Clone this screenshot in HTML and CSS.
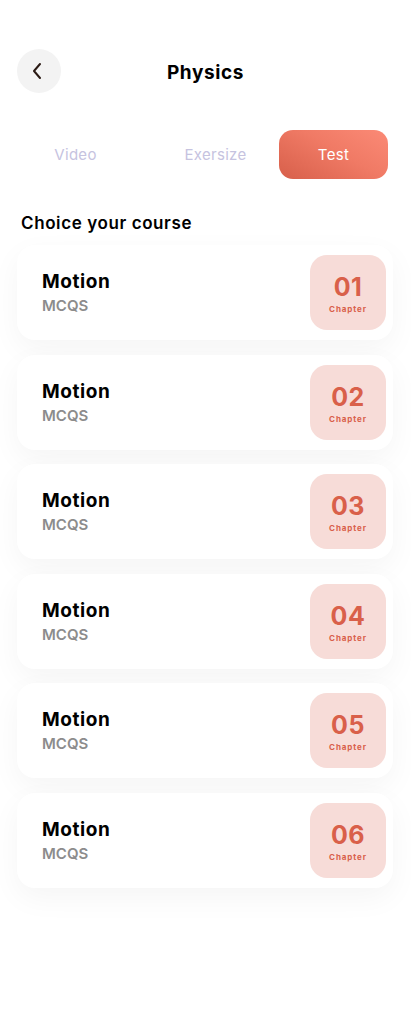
FILE: index.html
```html
<!DOCTYPE html>
<html lang="en">
<head>
  <meta charset="UTF-8" />
  <meta name="viewport" content="width=device-width, initial-scale=1.0"/>
  <title>Physics</title>
  <link rel="stylesheet" href="styles.css">
</head>
<body>

  <div class="header">
    <button class="back">
      <svg width="14" height="18" viewBox="0 0 14 18"><path d="M9 2 L3 9 L9 16" fill="none" stroke="#2a1a14" stroke-width="2" stroke-linecap="round" stroke-linejoin="round"/></svg>
    </button>
    <h1>Physics</h1>
  </div>

  <div class="tabs">
    <div class="tab">Video</div>
    <div class="tab">Exersize</div>
    <div class="tab active">Test</div>
  </div>

  <h2 class="section">Choice your course</h2>

  <div class="list">
    <div class="card">
      <div class="info"><div class="title">Motion</div><div class="sub">MCQS</div></div>
      <div class="badge"><span class="num">01</span><span class="lbl">Chapter</span></div>
    </div>
    <div class="card">
      <div class="info"><div class="title">Motion</div><div class="sub">MCQS</div></div>
      <div class="badge"><span class="num">02</span><span class="lbl">Chapter</span></div>
    </div>
    <div class="card">
      <div class="info"><div class="title">Motion</div><div class="sub">MCQS</div></div>
      <div class="badge"><span class="num">03</span><span class="lbl">Chapter</span></div>
    </div>
    <div class="card">
      <div class="info"><div class="title">Motion</div><div class="sub">MCQS</div></div>
      <div class="badge"><span class="num">04</span><span class="lbl">Chapter</span></div>
    </div>
    <div class="card">
      <div class="info"><div class="title">Motion</div><div class="sub">MCQS</div></div>
      <div class="badge"><span class="num">05</span><span class="lbl">Chapter</span></div>
    </div>
    <div class="card">
      <div class="info"><div class="title">Motion</div><div class="sub">MCQS</div></div>
      <div class="badge"><span class="num">06</span><span class="lbl">Chapter</span></div>
    </div>
  </div>

</body>
</html>
```

FILE: styles.css
```css
body {
  margin: 0;
  background: #fff;
  font-family: "Inter", "Noto Sans", sans-serif;
  color: #000;
}
.header {
  display: flex;
  align-items: center;
  padding: 49px 17px 0;
  height: 44px;
}
.back {
  width: 44px;
  height: 44px;
  border-radius: 50%;
  border: none;
  background: #f3f3f3;
  display: flex;
  align-items: center;
  justify-content: center;
  padding: 0 2px 0 0;
}
.header h1 {
  flex: 1;
  margin: 3px 44px 0 0;
  text-align: center;
  font-size: 19px;
  font-weight: 700;
  letter-spacing: 0.6px;
}
.tabs {
  display: flex;
  margin-top: 37px;
  padding-left: 21px;
}
.tab {
  width: 109px;
  height: 49px;
  display: flex;
  align-items: center;
  justify-content: center;
  font-size: 15px;
  letter-spacing: 0.3px;
  color: #c6c3df;
}
.tab + .tab {
  margin-left: 31px;
}
.tab.active {
  margin-left: 9px;
  border-radius: 14px;
  color: #fff;
  background: linear-gradient(30deg, #d75f4a 0%, #f07a65 55%, #fb8a76 100%);
}
.section {
  margin: 34px 0 0 21px;
  font-size: 17px;
  font-weight: 600;
  letter-spacing: 0.6px;
}
.list {
  display: flex;
  flex-direction: column;
  gap: 14.5px;
  padding: 12px 18px 120px 17px;
}
.card {
  height: 95px;
  border-radius: 18px;
  background: #fff;
  box-shadow: 0 10px 30px rgba(0, 0, 0, 0.045);
  display: flex;
  align-items: center;
  justify-content: space-between;
  padding: 0 7px 0 25px;
}
.title {
  font-size: 19px;
  font-weight: 700;
  letter-spacing: 0.6px;
}
.sub {
  font-size: 15px;
  font-weight: 600;
  color: #8c8c8c;
  margin-top: 3px;
}
.badge {
  width: 76px;
  height: 75px;
  border-radius: 17px;
  background: #f7dcd8;
  display: flex;
  flex-direction: column;
  align-items: center;
  justify-content: center;
  color: #d9604a;
}
.num {
  font-size: 25px;
  font-weight: 700;
  line-height: 28px;
  letter-spacing: 0.5px;
  margin-top: 2px;
}
.lbl {
  font-size: 8px;
  font-weight: 700;
  letter-spacing: 0.9px;
  margin-top: 3px;
}
```
